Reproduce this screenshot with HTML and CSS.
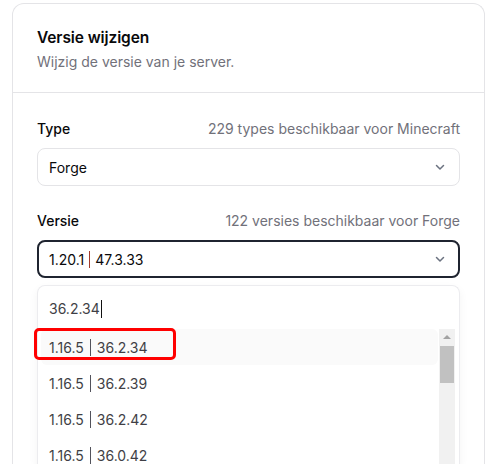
FILE: index.html
```html
<!DOCTYPE html>
<html lang="nl">
<head>
<meta charset="utf-8">
<title>Versie wijzigen</title>
<link rel="stylesheet" href="styles.css">
</head>
<body>
<div class="card">
  <div class="card-header">
    <h2 class="title">Versie wijzigen</h2>
    <p class="subtitle">Wijzig de versie van je server.</p>
  </div>
  <div class="card-body">
    <div class="field">
      <div class="field-head">
        <span class="label">Type</span>
        <span class="hint">229 types beschikbaar voor Minecraft</span>
      </div>
      <div class="select">
        <span class="value">Forge</span>
        <svg class="chev" width="12" height="12" viewBox="0 0 12 12"><path d="M2.5 4.5 6 8l3.5-3.5" fill="none" stroke="currentColor" stroke-width="1.5" stroke-linecap="round" stroke-linejoin="round"/></svg>
      </div>
    </div>
    <div class="field grow">
      <div class="field-head">
        <span class="label">Versie</span>
        <span class="hint">122 versies beschikbaar voor Forge</span>
      </div>
      <div class="select active">
        <span class="value">1.20.1<span class="sep red"></span>47.3.33</span>
        <svg class="chev" width="12" height="12" viewBox="0 0 12 12"><path d="M2.5 4.5 6 8l3.5-3.5" fill="none" stroke="currentColor" stroke-width="1.5" stroke-linecap="round" stroke-linejoin="round"/></svg>
      </div>
      <div class="dropdown">
        <div class="search"><span>36.2.34</span><span class="caret"></span></div>
        <div class="list-wrap">
          <ul class="list">
            <li class="item hl">1.16.5<span class="sep"></span>36.2.34</li>
            <li class="item">1.16.5<span class="sep"></span>36.2.39</li>
            <li class="item">1.16.5<span class="sep"></span>36.2.42</li>
            <li class="item">1.16.5<span class="sep"></span>36.0.42</li>
          </ul>
          <div class="scrollbar">
            <div class="sb-arrow"></div>
            <div class="sb-thumb"></div>
          </div>
        </div>
        <div class="annot"></div>
      </div>
    </div>
  </div>
</div>
</body>
</html>
```
FILE: styles.css
```css
* { box-sizing: border-box; }
html, body { margin: 0; padding: 0; background: #fff; overflow: hidden; }
body {
  font-family: Inter, "Liberation Sans", sans-serif;
  color: #09090b;
  height: 464px;
  padding-top: 3px;
}
.card {
  margin: 0 6px 0 12px;
  border: 1px solid #e4e4e7;
  border-bottom: 0;
  border-radius: 12px 12px 0 0;
  height: 461px;
  display: flex;
  flex-direction: column;
  overflow: hidden;
}
.card-header {
  padding: 24px 24px 20px;
  border-bottom: 1px solid #e4e4e7;
}
.title {
  margin: 0;
  font-size: 15.5px;
  font-weight: 600;
  line-height: 20px;
  letter-spacing: -0.1px;
}
.subtitle {
  margin: 4px 0 0;
  font-size: 14px;
  line-height: 20px;
  color: #71717a;
}
.card-body {
  flex: 1;
  min-height: 0;
  padding: 26px 24px 0;
  display: flex;
  flex-direction: column;
  gap: 25px;
}
.field { display: flex; flex-direction: column; position: relative; }
.field.grow { flex: 1; min-height: 0; }
.field-head {
  display: flex;
  justify-content: space-between;
  align-items: baseline;
  line-height: 20px;
  margin-bottom: 9px;
}
.label { font-size: 14px; font-weight: 500; }
.hint { font-size: 14px; color: #71717a; }
.select {
  height: 38px;
  flex: none;
  border: 1px solid #e4e4e7;
  border-radius: 8px;
  display: flex;
  align-items: center;
  justify-content: space-between;
  padding: 0 13px 0 11px;
  font-size: 14px;
}
.select.active {
  border: 2px solid #1f2430;
  padding: 0 12px 0 10px;
}
.value { display: flex; align-items: center; }
.chev { color: #6b7280; }
.sep {
  display: inline-block;
  width: 1px;
  height: 17px;
  background: #52525b;
  margin: 0 6px;
}
.sep.red { background: #a33a2a; margin: 0 5px; }
.dropdown {
  flex: 1;
  min-height: 0;
  margin-top: 7px;
  border: 1px solid #ececef;
  border-bottom: 0;
  border-radius: 8px 8px 0 0;
  box-shadow: 0 4px 10px rgba(0,0,0,0.05);
  position: relative;
  display: flex;
  flex-direction: column;
}
.search {
  height: 43px;
  flex: none;
  display: flex;
  align-items: center;
  padding: 2px 11px 0;
  font-size: 14px;
  color: #3f3f46;
}
.caret {
  display: inline-block;
  width: 1px;
  height: 18px;
  background: #111;
  margin-left: 1px;
}
.list-wrap {
  flex: 1;
  min-height: 0;
  overflow: hidden;
  display: grid;
  grid-template-columns: 1fr 16px;
  gap: 1px;
  padding: 0 4px 0 3px;
}
.list { list-style: none; margin: 0; padding: 0; }
.item {
  height: 36px;
  display: flex;
  align-items: center;
  padding-left: 8px;
  font-size: 14px;
  color: #3f3f46;
  border-radius: 6px;
}
.item.hl { background: #fafafa; }
.scrollbar {
  background: #f1f1f1;
}
.sb-arrow {
  margin: 6px auto 0;
  width: 0; height: 0;
  border-left: 4px solid transparent;
  border-right: 4px solid transparent;
  border-bottom: 4px solid #a3a3a3;
}
.sb-thumb {
  margin: 7px 1px 0;
  height: 37px;
  background: #c1c1c1;
}
.annot {
  position: absolute;
  left: -4px;
  top: 42px;
  width: 142px;
  height: 32px;
  border: 3px solid #ff0000;
  border-radius: 5px;
}
```
